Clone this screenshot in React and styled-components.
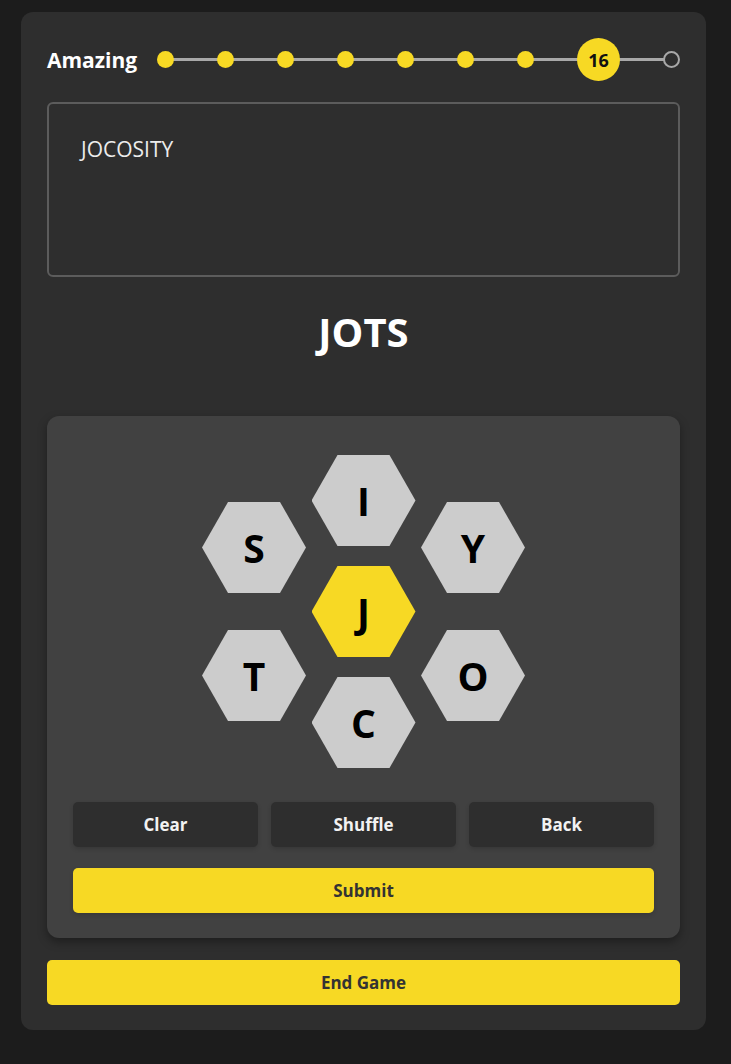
import React from 'react';
import styled, { createGlobalStyle } from 'styled-components';

const GlobalStyle = createGlobalStyle`
  body {
    margin: 0;
    background-color: #1c1c1c;
    font-family: 'Open Sans', 'Noto Sans', sans-serif;
  }
`;

const Page = styled.div`
  padding: 12px 25px 34px 21px;
`;

const Card = styled.div`
  background-color: #2e2e2e;
  border-radius: 12px;
  padding: 26px 26px 25px;
  display: flex;
  flex-direction: column;
`;

const ProgressRow = styled.div`
  display: flex;
  align-items: center;
  gap: 20px;
  height: 43px;
`;

const Rank = styled.span`
  color: #ffffff;
  font-size: 21px;
  font-weight: 700;
`;

const Track = styled.div`
  flex: 1;
  position: relative;
  display: flex;
  align-items: center;
  justify-content: space-between;

  &::before {
    content: '';
    position: absolute;
    left: 8px;
    right: 8px;
    top: 50%;
    height: 3px;
    margin-top: -1.5px;
    background-color: #a8a8a8;
  }
`;

const Dot = styled.span`
  position: relative;
  width: 17px;
  height: 17px;
  border-radius: 50%;
  box-sizing: border-box;
  background-color: ${({ $empty }) => ($empty ? '#2e2e2e' : '#f7d924')};
  border: ${({ $empty }) => ($empty ? '2px solid #a8a8a8' : 'none')};
`;

const Current = styled.span`
  position: relative;
  width: 43px;
  height: 43px;
  border-radius: 50%;
  background-color: #f7d924;
  color: #111;
  font-size: 18px;
  font-weight: 700;
  display: flex;
  align-items: center;
  justify-content: center;
`;

const WordBox = styled.div`
  margin-top: 21px;
  height: 175px;
  box-sizing: border-box;
  border: 2px solid #5c5c5c;
  border-radius: 6px;
  padding: 31px 32px;
  color: #ececec;
  font-size: 21px;
  line-height: 28px;
`;

const Guess = styled.h1`
  margin: 28px 0 57px;
  text-align: center;
  color: #ffffff;
  font-size: 40px;
  font-weight: 700;
  line-height: 54px;
`;

const Panel = styled.div`
  background-color: #414141;
  border-radius: 12px;
  padding: 39px 26px 25px;
  box-shadow: 0 4px 10px rgba(0, 0, 0, 0.35);
  display: flex;
  flex-direction: column;
`;

const Hive = styled.div`
  display: flex;
  justify-content: center;
  align-items: center;
  gap: 5.5px;
  margin-bottom: 34px;
`;

const HexColumn = styled.div`
  display: flex;
  flex-direction: column;
  gap: ${({ $gap }) => $gap}px;
`;

const Hex = styled.div`
  width: 104px;
  height: 91px;
  clip-path: polygon(25% 0, 75% 0, 100% 50%, 75% 100%, 25% 100%, 0 50%);
  background-color: ${({ $center }) => ($center ? '#f7d924' : '#cccccc')};
  color: #000;
  font-size: 39px;
  font-weight: 700;
  display: flex;
  align-items: center;
  justify-content: center;
`;

const ButtonRow = styled.div`
  display: grid;
  grid-template-columns: repeat(3, 1fr);
  gap: 13px;
  margin-bottom: 21px;
`;

const Button = styled.button`
  height: 45px;
  border: none;
  border-radius: 5px;
  font-family: inherit;
  font-size: 17px;
  font-weight: 700;
  cursor: pointer;
  background-color: ${({ $primary }) => ($primary ? '#f7d924' : '#2e2e2e')};
  color: ${({ $primary }) => ($primary ? '#333333' : '#f2f2f2')};
  box-shadow: 0 2px 4px rgba(0, 0, 0, 0.15);
`;

const EndButton = styled(Button)`
  margin-top: 22px;
  box-shadow: none;
`;

export default function App() {
  const filled = 7;
  return (
    <Page>
      <GlobalStyle />
      <Card>
        <ProgressRow>
          <Rank>Amazing</Rank>
          <Track>
            {Array.from({ length: filled }).map((_, i) => (
              <Dot key={i} />
            ))}
            <Current>16</Current>
            <Dot $empty />
          </Track>
        </ProgressRow>
        <WordBox>JOCOSITY</WordBox>
        <Guess>JOTS</Guess>
        <Panel>
          <Hive>
            <HexColumn $gap={37}>
              <Hex>S</Hex>
              <Hex>T</Hex>
            </HexColumn>
            <HexColumn $gap={20}>
              <Hex>I</Hex>
              <Hex $center>J</Hex>
              <Hex>C</Hex>
            </HexColumn>
            <HexColumn $gap={37}>
              <Hex>Y</Hex>
              <Hex>O</Hex>
            </HexColumn>
          </Hive>
          <ButtonRow>
            <Button>Clear</Button>
            <Button>Shuffle</Button>
            <Button>Back</Button>
          </ButtonRow>
          <Button $primary>Submit</Button>
        </Panel>
        <EndButton $primary>End Game</EndButton>
      </Card>
    </Page>
  );
}
